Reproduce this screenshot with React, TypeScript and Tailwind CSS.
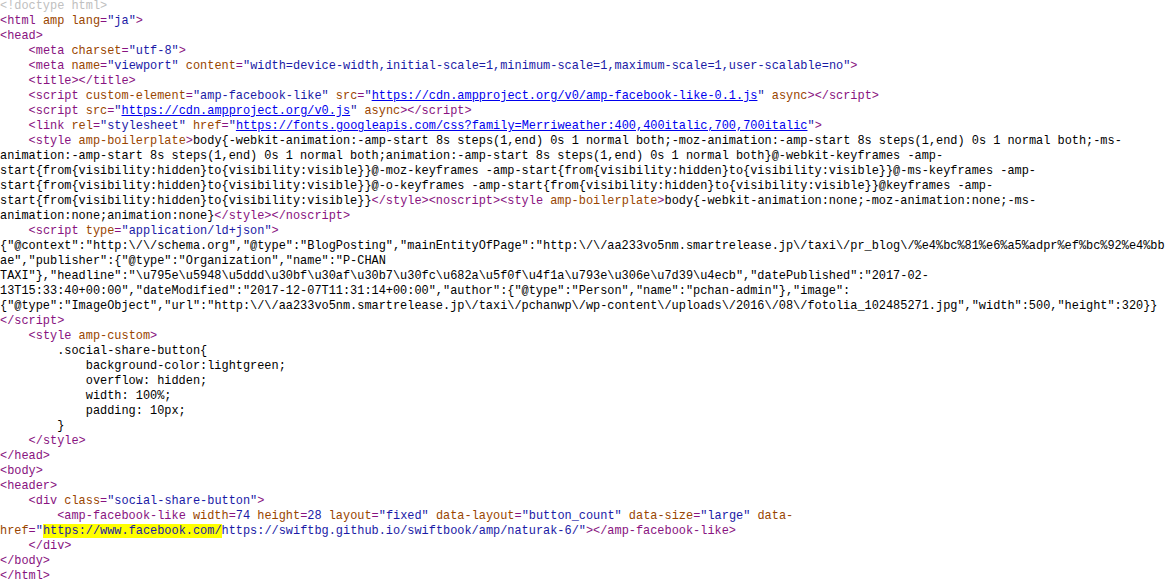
import React from 'react';

type Kind = 'd' | 't' | 'a' | 'v' | 'l' | 'x' | 'h';
type Seg = [Kind, string];

const kindClass: Record<Kind, string> = {
  d: 'text-[#c0c0c0]',
  t: 'text-[#881280]',
  a: 'text-[#994500]',
  v: 'text-[#1a1aa6]',
  l: 'text-[#0000ee] underline',
  x: 'text-black',
  h: 'text-[#1a1aa6] bg-[#ffff00]',
};

const attr = (name: string, value: string): Seg[] => [
  ['a', ' ' + name],
  ['t', '='],
  ['v', value],
];

const linkAttr = (name: string, url: string): Seg[] => [
  ['a', ' ' + name],
  ['t', '='],
  ['v', '"'],
  ['l', url],
  ['v', '"'],
];

const lines: Seg[][] = [
  [['d', '<!doctype html>']],
  [['t', '<html'], ['a', ' amp'], ...attr('lang', '"ja"'), ['t', '>']],
  [['t', '<head>']],
  [['x', '    '], ['t', '<meta'], ...attr('charset', '"utf-8"'), ['t', '>']],
  [
    ['x', '    '],
    ['t', '<meta'],
    ...attr('name', '"viewport"'),
    ...attr('content', '"width=device-width,initial-scale=1,minimum-scale=1,maximum-scale=1,user-scalable=no"'),
    ['t', '>'],
  ],
  [['x', '    '], ['t', '<title></title>']],
  [
    ['x', '    '],
    ['t', '<script'],
    ...attr('custom-element', '"amp-facebook-like"'),
    ...linkAttr('src', 'https://cdn.ampproject.org/v0/amp-facebook-like-0.1.js'),
    ['a', ' async'],
    ['t', '></script>'],
  ],
  [
    ['x', '    '],
    ['t', '<script'],
    ...linkAttr('src', 'https://cdn.ampproject.org/v0.js'),
    ['a', ' async'],
    ['t', '></script>'],
  ],
  [
    ['x', '    '],
    ['t', '<link'],
    ...attr('rel', '"stylesheet"'),
    ...linkAttr('href', 'https://fonts.googleapis.com/css?family=Merriweather:400,400italic,700,700italic'),
    ['t', '>'],
  ],
  [
    ['x', '    '],
    ['t', '<style'],
    ['a', ' amp-boilerplate'],
    ['t', '>'],
    ['x', 'body{-webkit-animation:-amp-start 8s steps(1,end) 0s 1 normal both;-moz-animation:-amp-start 8s steps(1,end) 0s 1 normal both;-ms-'],
  ],
  [['x', 'animation:-amp-start 8s steps(1,end) 0s 1 normal both;animation:-amp-start 8s steps(1,end) 0s 1 normal both}@-webkit-keyframes -amp-']],
  [['x', 'start{from{visibility:hidden}to{visibility:visible}}@-moz-keyframes -amp-start{from{visibility:hidden}to{visibility:visible}}@-ms-keyframes -amp-']],
  [['x', 'start{from{visibility:hidden}to{visibility:visible}}@-o-keyframes -amp-start{from{visibility:hidden}to{visibility:visible}}@keyframes -amp-']],
  [
    ['x', 'start{from{visibility:hidden}to{visibility:visible}}'],
    ['t', '</style><noscript><style'],
    ['a', ' amp-boilerplate'],
    ['t', '>'],
    ['x', 'body{-webkit-animation:none;-moz-animation:none;-ms-'],
  ],
  [['x', 'animation:none;animation:none}'], ['t', '</style></noscript>']],
  [['x', '    '], ['t', '<script'], ...attr('type', '"application/ld+json"'), ['t', '>']],
  [['x', '{"@context":"http:\\/\\/schema.org","@type":"BlogPosting","mainEntityOfPage":"http:\\/\\/aa233vo5nm.smartrelease.jp\\/taxi\\/pr_blog\\/%e4%bc%81%e6%a5%adpr%ef%bc%92%e4%bb']],
  [['x', 'ae","publisher":{"@type":"Organization","name":"P-CHAN']],
  [['x', 'TAXI"},"headline":"\\u795e\\u5948\\u5ddd\\u30bf\\u30af\\u30b7\\u30fc\\u682a\\u5f0f\\u4f1a\\u793e\\u306e\\u7d39\\u4ecb","datePublished":"2017-02-']],
  [['x', '13T15:33:40+00:00","dateModified":"2017-12-07T11:31:14+00:00","author":{"@type":"Person","name":"pchan-admin"},"image":']],
  [['x', '{"@type":"ImageObject","url":"http:\\/\\/aa233vo5nm.smartrelease.jp\\/taxi\\/pchanwp\\/wp-content\\/uploads\\/2016\\/08\\/fotolia_102485271.jpg","width":500,"height":320}}']],
  [['t', '</script>']],
  [['x', '    '], ['t', '<style'], ['a', ' amp-custom'], ['t', '>']],
  [['x', '        .social-share-button{']],
  [['x', '            background-color:lightgreen;']],
  [['x', '            overflow: hidden;']],
  [['x', '            width: 100%;']],
  [['x', '            padding: 10px;']],
  [['x', '        }']],
  [['x', '    '], ['t', '</style>']],
  [['t', '</head>']],
  [['t', '<body>']],
  [['t', '<header>']],
  [['x', '    '], ['t', '<div'], ...attr('class', '"social-share-button"'), ['t', '>']],
  [
    ['x', '        '],
    ['t', '<amp-facebook-like'],
    ...attr('width', '74'),
    ...attr('height', '28'),
    ...attr('layout', '"fixed"'),
    ...attr('data-layout', '"button_count"'),
    ...attr('data-size', '"large"'),
    ['a', ' data-'],
  ],
  [
    ['a', 'href'],
    ['t', '='],
    ['v', '"'],
    ['h', 'https://www.facebook.com/'],
    ['v', 'https://swiftbg.github.io/swiftbook/amp/naturak-6/"'],
    ['t', '></amp-facebook-like>'],
  ],
  [['x', '    '], ['t', '</div>']],
  [['t', '</body>']],
  [['t', '</html>']],
];

const App: React.FC = () => {
  return (
    <div className="w-[1166px] h-[584px] overflow-hidden bg-white">
      <div className="-mt-[1px] font-['Liberation_Mono',monospace] text-[11.92px]">
        {lines.map((segs, i) => (
          <div key={i} className="h-[15px] leading-[15px] whitespace-pre">
            {segs.map(([kind, text], j) => (
              <span key={j} className={kindClass[kind]}>
                {text}
              </span>
            ))}
          </div>
        ))}
      </div>
    </div>
  );
};

export default App;
